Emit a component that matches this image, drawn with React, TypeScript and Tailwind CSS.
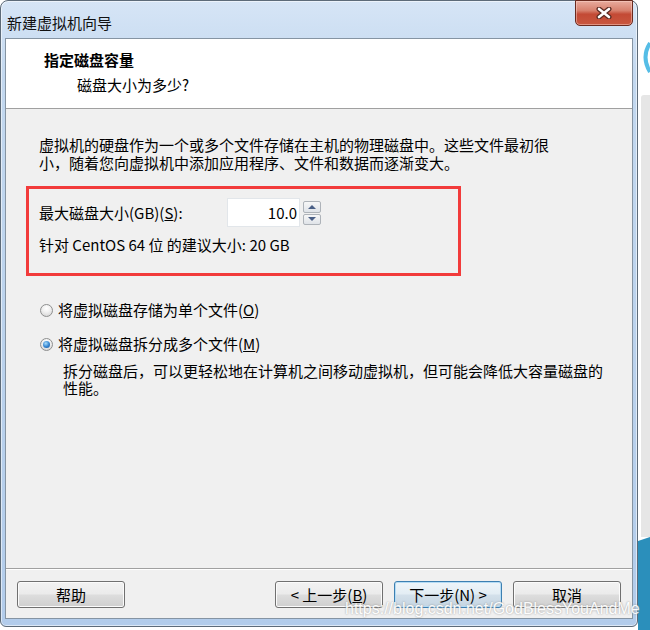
import React from "react";

const btn =
  "w-[108px] h-[27px] rounded-[3px] border border-[#707070] bg-[linear-gradient(180deg,#f2f2f2_0%,#ebebeb_48%,#dddddd_52%,#cfcfcf_100%)] shadow-[inset_0_0_0_1px_#fbfbfb] text-[15px] leading-[25px] text-center text-black";

function Radio({ checked }: { checked?: boolean }) {
  return (
    <div className="w-[13px] h-[13px] rounded-full border border-[#8e8f8f] bg-[radial-gradient(circle_at_50%_30%,#ffffff_0%,#f1f1f1_40%,#cfcfcf_100%)] flex items-center justify-center">
      {checked && (
        <div className="w-[7px] h-[7px] rounded-full bg-[radial-gradient(circle_at_40%_35%,#a8dcfb_0%,#3b8ad3_50%,#124f96_100%)]" />
      )}
    </div>
  );
}

export default function App() {
  return (
    <div className="w-[650px] h-[630px] bg-white flex overflow-hidden relative font-['Noto_Sans_CJK_SC','Noto_Sans',sans-serif] text-[15px] text-black">
      {/* window */}
      <div className="w-[638px] h-[627px] flex flex-col rounded-t-[8px] rounded-b-[6px] border border-[#5d6b79] bg-[linear-gradient(180deg,#d6e5f6_0%,#c3d8ef_12%,#bcd3ed_50%,#b2cceb_100%)] shadow-[inset_0_0_0_1px_rgba(255,255,255,0.55)]">
        <div className="h-[37px] flex items-start justify-between">
          <span className="pl-[6px] pt-[12px] leading-[20px] text-[#111]">新建虚拟机向导</span>
          <div className="-mt-px mr-[4px] w-[58px] h-[26px] rounded-b-[5px] border border-[#6a2a1f] bg-[linear-gradient(180deg,#e8ab9e_0%,#d7806d_40%,#c34a35_55%,#c9573f_100%)] shadow-[inset_0_0_0_1px_rgba(255,220,210,0.45)] flex items-center justify-center">
            <svg width="16" height="12" viewBox="0 0 16 12">
              <path d="M3 2 L13 10 M13 2 L3 10" stroke="#5a2a22" strokeWidth="5" strokeLinecap="round" />
              <path d="M3 2 L13 10 M13 2 L3 10" stroke="#ffffff" strokeWidth="2.6" strokeLinecap="round" />
            </svg>
          </div>
        </div>

        {/* client area */}
        <div className="mx-[4px] mb-[7px] flex-1 flex flex-col border border-[#8594a3] bg-[#f0f0f0]">
          <div className="h-[70px] shrink-0 bg-white border-b border-[#a0a0a0] pl-[38px] pt-[11px]">
            <div className="font-bold leading-[20px]">指定磁盘容量</div>
            <div className="mt-[5px] ml-[33px] leading-[20px]">磁盘大小为多少?</div>
          </div>

          <div className="flex-1 pl-[33px] pt-[27px] border-b border-[#a0a0a0]">
            <div className="leading-[18px]">
              <div>虚拟机的硬盘作为一个或多个文件存储在主机的物理磁盘中。这些文件最初很</div>
              <div>小，随着您向虚拟机中添加应用程序、文件和数据而逐渐变大。</div>
            </div>

            <div className="mt-[14px] ml-[-13px] w-[435px] h-[90px] border-[3px] border-[#f23b3b] pl-[10px] pt-[9px]">
              <div className="flex h-[29px] items-start">
                <span className="w-[188px] leading-[29px]">
                  最大磁盘大小(GB)(<span className="underline">S</span>):
                </span>
                <div className="w-[73px] h-[29px] bg-white border border-[#e2e6ea] text-right pr-[2px] leading-[27px]">10.0</div>
                <div className="ml-[3px] mt-[3px] w-[18px] h-[24px] flex flex-col gap-px">
                  <div className="flex-1 rounded-[2px] border border-[#aeb3b9] bg-[linear-gradient(180deg,#f7f7f7,#dfe3e8)] flex items-center justify-center">
                    <svg width="8" height="4" viewBox="0 0 8 4"><path d="M0 4 L4 0 L8 4 Z" fill="#4a5f86" /></svg>
                  </div>
                  <div className="flex-1 rounded-[2px] border border-[#aeb3b9] bg-[linear-gradient(180deg,#f7f7f7,#dfe3e8)] flex items-center justify-center">
                    <svg width="8" height="4" viewBox="0 0 8 4"><path d="M0 0 L8 0 L4 4 Z" fill="#4a5f86" /></svg>
                  </div>
                </div>
              </div>
              <div className="mt-[8px] leading-[20px]">针对 CentOS 64 位 的建议大小: 20 GB</div>
            </div>

            <div className="mt-[24px] flex items-center gap-[5px] ml-[1px] leading-[20px]">
              <Radio />
              <span>将虚拟磁盘存储为单个文件(<span className="underline">O</span>)</span>
            </div>
            <div className="mt-[14px] flex items-center gap-[5px] ml-[1px] leading-[20px]">
              <Radio checked />
              <span>将虚拟磁盘拆分成多个文件(<span className="underline">M</span>)</span>
            </div>
            <div className="mt-[8px] pl-[24px] leading-[17px]">
              <div>拆分磁盘后，可以更轻松地在计算机之间移动虚拟机，但可能会降低大容量磁盘的</div>
              <div>性能。</div>
            </div>
          </div>

          <div className="h-[49px] shrink-0 border-t border-white px-[11px] pt-[11px] flex justify-between items-start">
            <div className={btn}>帮助</div>
            <div className="flex gap-[11px]">
              <div className={btn}>
                &lt; 上一步(<span className="underline">B</span>)
              </div>
              <div className={btn + " !border-[#3c7fb1] !bg-[linear-gradient(180deg,#eef5fa_0%,#e3edf4_48%,#d3e0ea_52%,#c5d5e2_100%)] !shadow-[inset_0_0_0_1px_#b5dcf5]"}>
                下一步(N) &gt;
              </div>
              <div className={btn}>取消</div>
            </div>
          </div>
        </div>
      </div>

      {/* background to the right of the window */}
      <div className="flex-1 flex flex-col">
        <div className="h-[95px] shrink-0">
          <svg width="12" height="95" viewBox="0 0 12 95">
            <path d="M12 43 Q3 57 12 72" stroke="#55bde6" strokeWidth="4" fill="none" />
          </svg>
        </div>
        <div className="flex-1 pl-[3px]">
          <div className="h-full rounded-tl-[3px] bg-[#e6e6e6]" />
        </div>
        <div className="h-[93px] shrink-0">
          <svg width="12" height="93" viewBox="0 0 12 93">
            <path d="M0 4 L12 0 L12 93 L0 93 Z" fill="#2b8fbb" />
          </svg>
        </div>
      </div>

      {/* watermark */}
      <div className="absolute left-[345px] top-[599px] text-[16px] leading-[20px] text-white font-['Liberation_Sans',sans-serif] [text-shadow:0_0_2px_#8a8a8a] opacity-90">
        https://blog.csdn.net/GodBlessYouAndMe
      </div>
    </div>
  );
}
